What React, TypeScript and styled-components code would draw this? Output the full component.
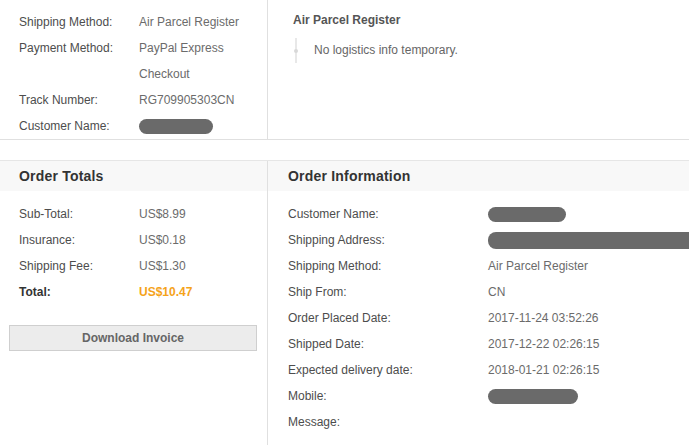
import styled, { createGlobalStyle } from "styled-components";

const GlobalStyle = createGlobalStyle`
  html, body {
    margin: 0;
    padding: 0;
    background: #fff;
  }
  body {
    font-family: "Liberation Sans", Arial, sans-serif;
    font-size: 12px;
    color: #555;
  }
`;

const Page = styled("div")`
  width: 689px;
  height: 445px;
  overflow: hidden;
`;

const TopSection = styled("section")`
  display: grid;
  grid-template-columns: 268px 1fr;
  height: 140px;
  box-sizing: border-box;
  border-bottom: 1px solid #e0e0e0;
`;

const BottomSection = styled("section")`
  display: grid;
  grid-template-columns: 268px 1fr;
  margin-top: 20px;
  border-top: 1px solid #e6e6e6;
  height: 285px;
`;

const Column = styled("div")<{ $divider?: boolean }>`
  box-sizing: border-box;
  border-right: ${({ $divider }) => ($divider ? "1px solid #e0e0e0" : "none")};
`;

const RowList = styled("div")<{ $top: number; $left: number }>`
  padding: ${({ $top, $left }) => `${$top}px 0 0 ${$left}px`};
`;

const Row = styled("div")<{ $labelWidth: number }>`
  display: grid;
  grid-template-columns: ${({ $labelWidth }) => `${$labelWidth}px 1fr`};
  line-height: 26px;
`;

const Label = styled("span")<{ $strong?: boolean }>`
  color: ${({ $strong }) => ($strong ? "#333" : "#4d4d4d")};
  font-weight: ${({ $strong }) => ($strong ? "bold" : "normal")};
  white-space: nowrap;
`;

const Value = styled("span")<{ $total?: boolean; $max?: number }>`
  color: ${({ $total }) => ($total ? "#f5a31a" : "#6b6b6b")};
  font-weight: ${({ $total }) => ($total ? "bold" : "normal")};
  max-width: ${({ $max }) => ($max ? `${$max}px` : "none")};
  white-space: ${({ $max }) => ($max ? "normal" : "nowrap")};
`;

const Redacted = styled("span")<{ $width: number; $height?: number }>`
  display: inline-block;
  vertical-align: middle;
  width: ${({ $width }) => $width}px;
  height: ${({ $height }) => $height ?? 15}px;
  border-radius: 8px;
  background: #6a6a6a;
`;

const Tracking = styled("div")`
  padding: 13px 0 0 25px;
`;

const TrackTitle = styled("div")`
  font-weight: bold;
  color: #555;
  line-height: 14px;
`;

const TrackLine = styled("div")`
  position: relative;
  margin: 11px 0 0 2px;
  height: 25px;
  padding-left: 17px;
  border-left: 2px solid #e8e8e8;
  line-height: 25px;
  color: #666;

  &::before {
    content: "";
    position: absolute;
    left: -3px;
    top: 11px;
    width: 4px;
    height: 4px;
    border-radius: 50%;
    background: #d8d8d8;
  }
`;

const PanelHeader = styled("h3")<{ $indent: number }>`
  margin: 0;
  height: 30px;
  padding-left: ${({ $indent }) => $indent}px;
  background: #f8f8f8;
  color: #333;
  font-size: 14px;
  font-weight: bold;
  line-height: 30px;
  letter-spacing: 0.2px;
`;

const InvoiceButton = styled("button")`
  display: block;
  width: 248px;
  height: 26px;
  margin: 20px 0 0 9px;
  border: 1px solid #cfcfcf;
  background: #ececec;
  color: #666;
  font-family: inherit;
  font-size: 12px;
  font-weight: bold;
  cursor: pointer;
`;

const shippingRows = [
  { label: "Shipping Method:", value: "Air Parcel Register" },
  { label: "Payment Method:", value: "PayPal Express Checkout" },
  { label: "Track Number:", value: "RG709905303CN" },
];

const totals = [
  { label: "Sub-Total:", value: "US$8.99" },
  { label: "Insurance:", value: "US$0.18" },
  { label: "Shipping Fee:", value: "US$1.30" },
];

const orderInfo: { label: string; value?: string; hidden?: number }[] = [
  { label: "Customer Name:", hidden: 78 },
  { label: "Shipping Address:", hidden: 210 },
  { label: "Shipping Method:", value: "Air Parcel Register" },
  { label: "Ship From:", value: "CN" },
  { label: "Order Placed Date:", value: "2017-11-24 03:52:26" },
  { label: "Shipped Date:", value: "2017-12-22 02:26:15" },
  { label: "Expected delivery date:", value: "2018-01-21 02:26:15" },
  { label: "Mobile:", hidden: 90 },
  { label: "Message:", value: "" },
];

export default function App() {
  return (
    <Page>
      <GlobalStyle />
      <TopSection>
        <Column $divider>
          <RowList $top={9} $left={19}>
            {shippingRows.map((r) => (
              <Row key={r.label} $labelWidth={120}>
                <Label>{r.label}</Label>
                <Value $max={112}>{r.value}</Value>
              </Row>
            ))}
            <Row $labelWidth={120}>
              <Label>Customer Name:</Label>
              <span>
                <Redacted $width={74} />
              </span>
            </Row>
          </RowList>
        </Column>
        <Tracking>
          <TrackTitle>Air Parcel Register</TrackTitle>
          <TrackLine>No logistics info temporary.</TrackLine>
        </Tracking>
      </TopSection>

      <BottomSection>
        <Column $divider>
          <PanelHeader $indent={19}>Order Totals</PanelHeader>
          <RowList $top={10} $left={19}>
            {totals.map((t) => (
              <Row key={t.label} $labelWidth={120}>
                <Label>{t.label}</Label>
                <Value>{t.value}</Value>
              </Row>
            ))}
            <Row $labelWidth={120}>
              <Label $strong>Total:</Label>
              <Value $total>US$10.47</Value>
            </Row>
          </RowList>
          <InvoiceButton>Download Invoice</InvoiceButton>
        </Column>
        <Column>
          <PanelHeader $indent={20}>Order Information</PanelHeader>
          <RowList $top={10} $left={20}>
            {orderInfo.map((o) => (
              <Row key={o.label} $labelWidth={200}>
                <Label>{o.label}</Label>
                {o.hidden ? (
                  <span>
                    <Redacted $width={o.hidden} $height={o.hidden > 150 ? 17 : 15} />
                  </span>
                ) : (
                  <Value>{o.value}</Value>
                )}
              </Row>
            ))}
          </RowList>
        </Column>
      </BottomSection>
    </Page>
  );
}
